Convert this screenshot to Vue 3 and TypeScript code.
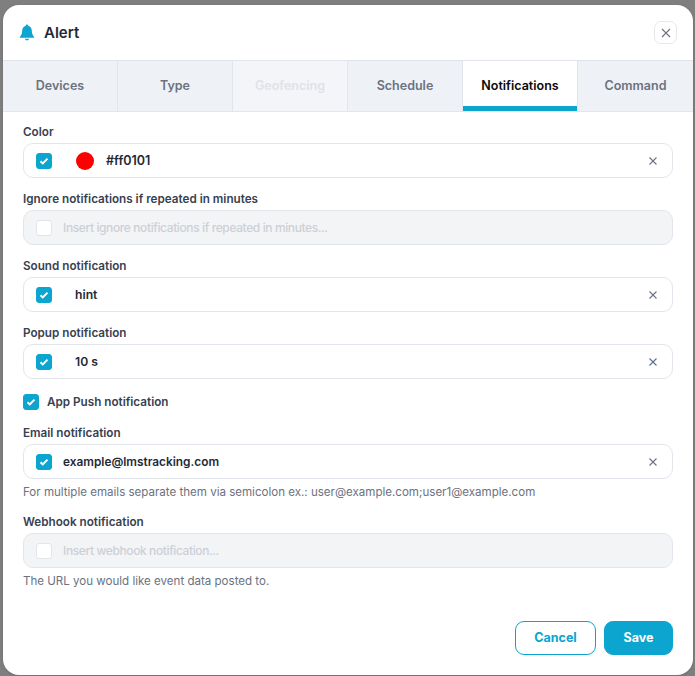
<script setup lang="ts">
const tabs = [
  { name: 'Devices', state: '' },
  { name: 'Type', state: '' },
  { name: 'Geofencing', state: 'disabled' },
  { name: 'Schedule', state: '' },
  { name: 'Notifications', state: 'active' },
  { name: 'Command', state: '' },
]
</script>

<template>
  <div class="page">
    <section class="modal">
      <header class="head">
        <div class="title">
          <svg class="bell" viewBox="0 0 16 17" width="16" height="17" aria-hidden="true">
            <path fill="#0ba5cf" d="M8 0.6c.7 0 1.2.5 1.2 1.1 2.3.5 3.5 2.5 3.6 4.8.1 2.900.7 4.700 2.300 6.400.4.4.1.9-.4.9H1.300c-.5 0-.8-.5-.4-.9 1.600-1.700 2.200-3.500 2.300-6.400.1-2.300 1.300-4.300 3.600-4.800C6.800 1.100 7.300.6 8 .6z" />
            <path fill="#0ba5cf" d="M6 14.700h4c-.2 1-1 1.700-2 1.700s-1.800-.7-2-1.700z" />
          </svg>
          <span>Alert</span>
        </div>
        <button class="close" type="button" aria-label="Close">
          <svg viewBox="0 0 10 10" width="10" height="10"><path d="M1 1l8 8M9 1l-8 8" stroke="#6b7280" stroke-width="1.100" fill="none" /></svg>
        </button>
      </header>

      <nav class="tabs">
        <div v-for="t in tabs" :key="t.name" class="tab" :class="t.state">{{ t.name }}</div>
      </nav>

      <div class="body">
        <div class="field">
          <label>Color</label>
          <div class="input">
            <span class="cb on"><svg viewBox="0 0 10 8" width="10" height="8"><path d="M1.500 4.200l2.300 2.200 4.700-4.800" stroke="#fff" stroke-width="2" fill="none" /></svg></span>
            <span class="swatch"></span>
            <span class="value color-value">#ff0101</span>
            <svg class="clear" viewBox="0 0 8 8" width="8" height="8"><path d="M.5.500l7 7M7.500.500l-7 7" stroke="#6b7280" stroke-width="1.100" fill="none" /></svg>
          </div>
        </div>

        <div class="field">
          <label>Ignore notifications if repeated in minutes</label>
          <div class="input off">
            <span class="cb"></span>
            <span class="placeholder">Insert ignore notifications if repeated in minutes...</span>
          </div>
        </div>

        <div class="field">
          <label>Sound notification</label>
          <div class="input">
            <span class="cb on"><svg viewBox="0 0 10 8" width="10" height="8"><path d="M1.500 4.200l2.300 2.200 4.700-4.800" stroke="#fff" stroke-width="2" fill="none" /></svg></span>
            <span class="value select-value">hint</span>
            <svg class="clear" viewBox="0 0 8 8" width="8" height="8"><path d="M.5.500l7 7M7.500.500l-7 7" stroke="#6b7280" stroke-width="1.100" fill="none" /></svg>
          </div>
        </div>

        <div class="field">
          <label>Popup notification</label>
          <div class="input">
            <span class="cb on"><svg viewBox="0 0 10 8" width="10" height="8"><path d="M1.500 4.200l2.300 2.200 4.700-4.800" stroke="#fff" stroke-width="2" fill="none" /></svg></span>
            <span class="value select-value">10 s</span>
            <svg class="clear" viewBox="0 0 8 8" width="8" height="8"><path d="M.5.500l7 7M7.500.500l-7 7" stroke="#5b6f8f" stroke-width="1.100" fill="none" /></svg>
          </div>
        </div>

        <div class="push">
          <span class="cb on"><svg viewBox="0 0 10 8" width="10" height="8"><path d="M1.500 4.200l2.300 2.200 4.700-4.800" stroke="#fff" stroke-width="2" fill="none" /></svg></span>
          <span>App Push notification</span>
        </div>

        <div class="field with-hint">
          <label>Email notification</label>
          <div class="input">
            <span class="cb on"><svg viewBox="0 0 10 8" width="10" height="8"><path d="M1.500 4.200l2.300 2.200 4.700-4.800" stroke="#fff" stroke-width="2" fill="none" /></svg></span>
            <span class="value email-value">example@lmstracking.com</span>
            <svg class="clear" viewBox="0 0 8 8" width="8" height="8"><path d="M.5.500l7 7M7.500.500l-7 7" stroke="#6b7280" stroke-width="1.100" fill="none" /></svg>
          </div>
          <p class="hint">For multiple emails separate them via semicolon ex.: user@example.com;user1@example.com</p>
        </div>

        <div class="field with-hint">
          <label>Webhook notification</label>
          <div class="input off">
            <span class="cb"></span>
            <span class="placeholder">Insert webhook notification...</span>
          </div>
          <p class="hint">The URL you would like event data posted to.</p>
        </div>
      </div>

      <footer class="foot">
        <button class="btn ghost" type="button">Cancel</button>
        <button class="btn solid" type="button">Save</button>
      </footer>
    </section>
  </div>
</template>

<style>
html, body { margin: 0; padding: 0; background: #7f7f7f; }
</style>

<style scoped>
.page {
  width: 695px;
  height: 676px;
  overflow: hidden;
  background: #7f7f7f;
  padding: 5px 2px 1px 3px;
  box-sizing: border-box;
  font-family: Inter, "Liberation Sans", sans-serif;
}
.modal {
  height: 670px;
  background: #fff;
  border-radius: 16px;
  display: flex;
  flex-direction: column;
  overflow: hidden;
  box-shadow: 0 1px 3px rgba(0, 0, 0, 0.15);
}
.head {
  height: 55px;
  flex: none;
  box-sizing: border-box;
  display: flex;
  align-items: center;
  justify-content: space-between;
  padding: 0 16px 0 16px;
}
.title {
  display: flex;
  align-items: center;
  gap: 9px;
  font-size: 15px;
  font-weight: 600;
  color: #1f2937;
}
.bell { display: block; margin-top: -1px; }
.close {
  width: 23px;
  height: 23px;
  padding: 0;
  border: 1px solid #e5e7eb;
  border-radius: 7px;
  background: #fff;
  display: flex;
  align-items: center;
  justify-content: center;
}
.tabs {
  display: flex;
  flex: none;
  height: 52px;
  box-sizing: border-box;
  background: #eef1f6;
  border-top: 1px solid #e2e6ec;
  border-bottom: 1px solid #e2e6ec;
}
.tab {
  width: 115px;
  flex: none;
  box-sizing: border-box;
  border-right: 1px solid #e2e6ec;
  display: flex;
  align-items: center;
  justify-content: center;
  padding-bottom: 1px;
  font-size: 12.500px;
  font-weight: 600;
  color: #6b7280;
}
.tab:last-child { border-right: 0; }
.tab.disabled { color: #dfe2e7; background: #f3f5f9; }
.tab.active {
  color: #0a0a0a;
  background: #fff;
  box-shadow: inset 0 -5px 0 #0ba5cf;
}
.body {
  flex: 1;
  padding: 10px 20px 0;
}
.field { margin-bottom: 11px; }
.field.with-hint { margin-bottom: 10px; }
label {
  display: block;
  font-size: 11.700px;
  font-weight: 600;
  line-height: 20px;
  color: #374151;
  margin-bottom: 1px;
}
.input {
  height: 35px;
  box-sizing: border-box;
  border: 1px solid #e2e5eb;
  border-radius: 10px;
  background: #fff;
  display: flex;
  align-items: center;
  padding: 0 15px 0 12px;
  font-size: 12.500px;
}
.input.off { background: #f3f4f6; }
.cb {
  width: 16px;
  height: 16px;
  flex: none;
  box-sizing: border-box;
  border-radius: 3px;
  border: 1px solid #e2e5eb;
  background: #fff;
  display: flex;
  align-items: center;
  justify-content: center;
}
.cb.on { background: #0ba5cf; border-color: #0ba5cf; }
.swatch {
  width: 18px;
  height: 18px;
  border-radius: 50%;
  background: #ff0000;
  margin-left: 24px;
  flex: none;
}
.value {
  margin-left: 11px;
  font-weight: 600;
  color: #1f2937;
  flex: 1;
}
.color-value { margin-left: 12px; }
.select-value { margin-left: 23px; font-size: 12.200px; padding-bottom: 1px; }
.email-value { font-size: 11.850px; }
.placeholder {
  margin-left: 11px;
  color: #ccd0d6;
  font-weight: 500;
  font-size: 12px;
  letter-spacing: -0.390px;
}
.clear { flex: none; }
.push {
  display: flex;
  align-items: center;
  gap: 8px;
  padding: 4px 0 2px;
  margin-bottom: 11px;
  font-size: 11.700px;
  font-weight: 600;
  color: #374151;
}
.hint {
  margin: 3px 0 0;
  font-size: 11.550px;
  line-height: 20px;
  color: #6b7280;
}
.foot {
  flex: none;
  display: flex;
  justify-content: flex-end;
  gap: 8px;
  padding: 0 20px 20px;
}
.btn {
  height: 34px;
  border-radius: 9px;
  font-family: inherit;
  font-size: 12.500px;
  font-weight: 700;
  padding: 0 0 1px;
  box-sizing: border-box;
}
.ghost {
  width: 81px;
  background: #fff;
  color: #0ba5cf;
  border: 1px solid #0ba5cf;
}
.solid {
  width: 69px;
  background: #0ba5cf;
  color: #fff;
  border: 1px solid #0ba5cf;
}
</style>
